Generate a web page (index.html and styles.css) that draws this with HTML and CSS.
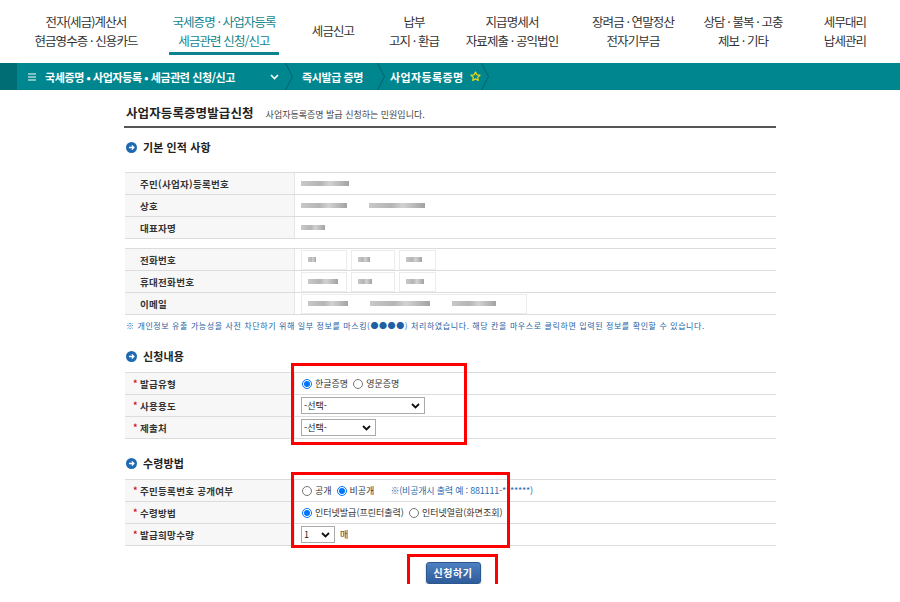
FILE: index.html
```html
<!DOCTYPE html>
<html lang="ko">
<head>
    <meta charset="UTF-8">
    <title>사업자등록증명발급신청</title>
    <link rel="stylesheet" href="styles.css">
</head>
<body>
    <header class="gnb">
        <ul class="gnb-list">
            <li>전자(세금)계산서<br>현금영수증 · 신용카드</li>
            <li class="on"><span>국세증명 · 사업자등록<br>세금관련 신청/신고</span></li>
            <li class="one">세금신고</li>
            <li>납부<br>고지 · 환급</li>
            <li>지급명세서<br>자료제출 · 공익법인</li>
            <li>장려금 · 연말정산<br>전자기부금</li>
            <li>상담 · 불복 · 고충<br>제보 · 기타</li>
            <li>세무대리<br>납세관리</li>
        </ul>
    </header>

    <nav class="location">
        <span class="loc-edge"></span>
        <div class="loc-menu">
            <svg class="loc-ham" width="8" height="8" viewBox="0 0 8 8"><path d="M0 1h8M0 4h8M0 7h8" stroke="#fff" stroke-width="1.2"/></svg>
            <span class="loc-title">국세증명 • 사업자등록 • 세금관련 신청/신고</span>
            <svg class="loc-down" width="9" height="6" viewBox="0 0 9 6"><path d="M1 1l3.5 3.5L8 1" fill="none" stroke="#fff" stroke-width="1.6"/></svg>
        </div>
        <svg class="loc-sep" width="8" height="27" viewBox="0 0 8 27"><path d="M0.5 0L7.5 13.5L0.5 27" fill="none" stroke="#00616a" stroke-width="1"/></svg>
        <div class="loc-item first">즉시발급 증명</div>
        <svg class="loc-sep" width="8" height="27" viewBox="0 0 8 27"><path d="M0.5 0L7.5 13.5L0.5 27" fill="none" stroke="#00616a" stroke-width="1"/></svg>
        <div class="loc-item last">사업자등록증명
            <svg class="loc-star" width="11" height="11" viewBox="0 0 12 12"><path d="M6 1l1.5 3.2 3.4.4-2.5 2.3.7 3.4L6 8.6 2.9 10.3l.7-3.4L1.1 4.6l3.4-.4z" fill="none" stroke="#e9d81c" stroke-width="1.3" stroke-linejoin="round"/></svg>
        </div>
        <svg class="loc-sep" width="8" height="27" viewBox="0 0 8 27"><path d="M0.5 0L7.5 13.5L0.5 27" fill="none" stroke="#00616a" stroke-width="1"/></svg>
    </nav>

    <main class="content">
        <div class="page-title">
            <h1>사업자등록증명발급신청</h1>
            <span class="page-desc">사업자등록증명 발급 신청하는 민원입니다.</span>
        </div>

        <h2 class="sec-title first">
            <svg width="11" height="11" viewBox="0 0 11 11"><circle cx="5.5" cy="5.5" r="5.5" fill="#1d6ab2"/><path d="M3 5.5h5M5.8 3.4l2.1 2.1-2.1 2.1" fill="none" stroke="#fff" stroke-width="1.3"/></svg>
            기본 인적 사항
        </h2>
        <div class="form-table">
            <div class="row">
                <div class="th">주민(사업자)등록번호</div>
                <div class="td"><span class="mask" style="width:48px"></span></div>
            </div>
            <div class="row">
                <div class="th">상호</div>
                <div class="td"><span class="mask" style="width:46px"></span><span class="mask gap" style="width:56px"></span></div>
            </div>
            <div class="row">
                <div class="th">대표자명</div>
                <div class="td"><span class="mask" style="width:24px"></span></div>
            </div>
        </div>
        <div class="form-table second">
            <div class="row">
                <div class="th">전화번호</div>
                <div class="td">
                    <span class="box" style="width:46px"><span class="mask" style="width:8px"></span></span>
                    <span class="box" style="width:44px"><span class="mask" style="width:12px"></span></span>
                    <span class="box" style="width:37px"><span class="mask" style="width:16px"></span></span>
                </div>
            </div>
            <div class="row">
                <div class="th">휴대전화번호</div>
                <div class="td">
                    <span class="box" style="width:46px"><span class="mask" style="width:30px"></span></span>
                    <span class="box" style="width:44px"><span class="mask" style="width:14px"></span></span>
                    <span class="box" style="width:37px"><span class="mask" style="width:18px"></span></span>
                </div>
            </div>
            <div class="row">
                <div class="th">이메일</div>
                <div class="td">
                    <span class="box wide"><span class="mask" style="width:40px"></span><span class="mask gap" style="width:60px"></span><span class="mask gap" style="width:44px"></span></span>
                </div>
            </div>
        </div>
        <p class="notice">※ 개인정보 유출 가능성을 사전 차단하기 위해 일부 정보를 마스킹(●●●●) 처리하였습니다. 해당 칸을 마우스로 클릭하면 입력된 정보를 확인할 수 있습니다.</p>

        <h2 class="sec-title">
            <svg width="11" height="11" viewBox="0 0 11 11"><circle cx="5.5" cy="5.5" r="5.5" fill="#1d6ab2"/><path d="M3 5.5h5M5.8 3.4l2.1 2.1-2.1 2.1" fill="none" stroke="#fff" stroke-width="1.3"/></svg>
            신청내용
        </h2>
        <div class="form-table">
            <div class="row">
                <div class="th req">발급유형</div>
                <div class="td">
                    <label class="radio"><input type="radio" name="lang" checked> 한글증명</label>
                    <label class="radio"><input type="radio" name="lang"> 영문증명</label>
                </div>
            </div>
            <div class="row">
                <div class="th req">사용용도</div>
                <div class="td">
                    <span class="select" style="width:124px"><select><option>-선택-</option></select>
                        <svg width="9" height="6" viewBox="0 0 9 6"><path d="M1 1l3.5 3.5L8 1" fill="none" stroke="#111" stroke-width="1.8"/></svg></span>
                </div>
            </div>
            <div class="row">
                <div class="th req">제출처</div>
                <div class="td">
                    <span class="select" style="width:75px"><select><option>-선택-</option></select>
                        <svg width="9" height="6" viewBox="0 0 9 6"><path d="M1 1l3.5 3.5L8 1" fill="none" stroke="#111" stroke-width="1.8"/></svg></span>
                </div>
            </div>
        </div>

        <h2 class="sec-title">
            <svg width="11" height="11" viewBox="0 0 11 11"><circle cx="5.5" cy="5.5" r="5.5" fill="#1d6ab2"/><path d="M3 5.5h5M5.8 3.4l2.1 2.1-2.1 2.1" fill="none" stroke="#fff" stroke-width="1.3"/></svg>
            수령방법
        </h2>
        <div class="form-table">
            <div class="row">
                <div class="th req">주민등록번호 공개여부</div>
                <div class="td">
                    <label class="radio"><input type="radio" name="open"> 공개</label>
                    <label class="radio"><input type="radio" name="open" checked> 비공개</label>
                    <span class="hint">※(비공개시 출력 예 : 881111-*******)</span>
                </div>
            </div>
            <div class="row">
                <div class="th req">수령방법</div>
                <div class="td">
                    <label class="radio"><input type="radio" name="recv" checked> 인터넷발급(프린터출력)</label>
                    <label class="radio"><input type="radio" name="recv"> 인터넷열람(화면조회)</label>
                </div>
            </div>
            <div class="row">
                <div class="th req">발급희망수량</div>
                <div class="td">
                    <span class="select" style="width:34px"><select><option>1</option></select>
                        <svg width="9" height="6" viewBox="0 0 9 6"><path d="M1 1l3.5 3.5L8 1" fill="none" stroke="#111" stroke-width="1.8"/></svg></span>
                    <span class="unit">매</span>
                </div>
            </div>
        </div>

        <div class="btn-area">
            <button class="btn-submit">신청하기</button>
        </div>

        <!-- highlight boxes drawn over the form -->
        <span class="mark mark-apply"></span>
        <span class="mark mark-recv"></span>
        <span class="mark mark-btn"></span>
    </main>
</body>
</html>
```

FILE: styles.css
```css
body {
    margin: 0;
    font-family: "Noto Sans CJK KR", "Noto Sans", sans-serif;
    color: #333;
    background: #fff;
}

/* top menu */
.gnb-list {
    list-style: none;
    margin: 0;
    padding: 0 0 0 17px;
    display: grid;
    grid-template-columns: 138px 138px 80px 82px 114px 128px 92px 112px;
    height: 63px;
}
.gnb-list li {
    text-align: center;
    font-size: 12.5px;
    line-height: 19px;
    padding-top: 12px;
    letter-spacing: -0.9px;
    white-space: nowrap;
    color: #333;
}
.gnb-list li.one {
    padding-top: 21px;
}
.gnb-list li.on {
    color: #138690;
}
.gnb-list li.on span {
    display: inline-block;
    padding: 0 3px 2px;
    border-bottom: 3px solid #0b838d;
}

/* location bar */
.location {
    display: flex;
    height: 27px;
    background: #00868f;
    color: #fff;
    font-size: 11px;
    font-weight: bold;
    letter-spacing: -0.4px;
}
.loc-edge {
    width: 17px;
    background: #006c74;
}
.loc-menu {
    display: flex;
    align-items: center;
    width: 257px;
    padding-left: 11px;
}
.loc-ham {
    margin-right: 9px;
}
.loc-title {
    flex: 1;
}
.loc-down {
    margin-right: 6px;
}
.loc-item {
    display: flex;
    align-items: center;
}
.loc-item.first {
    padding: 0 14px 0 9px;
}
.loc-item.last {
    padding: 0 0 0 5px;
    letter-spacing: 0.4px;
}
.loc-star {
    margin-left: 6px;
}

/* content */
.content {
    position: relative;
    width: 652px;
    margin: 0 auto;
    padding-top: 14px;
}
.page-title {
    display: flex;
    align-items: baseline;
    height: 22px;
    padding-left: 2px;
    border-bottom: 2px solid #555;
}
.page-title h1 {
    margin: 0;
    font-size: 12.5px;
    line-height: 18px;
    font-weight: bold;
    letter-spacing: 0.1px;
    color: #222;
}
.page-desc {
    margin-left: 12px;
    font-size: 9px;
    letter-spacing: 0;
    color: #444;
}
.sec-title {
    display: flex;
    align-items: center;
    margin: 16px 0 8px;
    height: 16px;
    padding-left: 2px;
    font-size: 11px;
    font-weight: bold;
    letter-spacing: 0.1px;
    color: #222;
}
.sec-title svg {
    margin-right: 6px;
}
.sec-title.first {
    margin: 11px 0 17px;
}

.form-table {
    margin-left: 1px;
    border-top: 1px solid #dcdcdc;
}
.form-table.second {
    margin-top: 9px;
}
.row {
    display: flex;
    height: 22px;
    box-sizing: border-box;
    border-bottom: 1px solid #dcdcdc;
}
.th {
    width: 170px;
    box-sizing: border-box;
    padding-left: 15px;
    display: flex;
    align-items: center;
    background: #f7f7f7;
    border-right: 1px solid #e6e6e6;
    font-size: 9.5px;
    font-weight: bold;
    letter-spacing: 0.3px;
    color: #333;
}
.th.req {
    padding-left: 8px;
}
.th.req::before {
    content: "*";
    color: #d0101b;
    font-size: 9px;
    width: 7px;
}
.td {
    flex: 1;
    display: flex;
    align-items: center;
    padding-left: 6px;
    font-size: 9px;
    color: #333;
}

/* masked personal data */
.mask {
    display: inline-block;
    height: 5px;
    background: linear-gradient(90deg, #c8c8c8, #b5b5b5 40%, #d2d2d2 60%, #a2a2a2);
    filter: blur(0.7px);
}
.mask.gap {
    margin-left: 22px;
}
.box {
    display: inline-flex;
    align-items: center;
    height: 20px;
    box-sizing: border-box;
    margin-right: 4px;
    padding-left: 6px;
    border: 1px solid #ececec;
}
.box.wide {
    width: 226px;
}

.notice {
    margin: 5px 0 0 2px;
    font-size: 8px;
    line-height: 12px;
    letter-spacing: 0.6px;
    color: #1f5fa4;
}

/* inputs */
.radio {
    display: inline-flex;
    align-items: center;
    margin-right: 4px;
    letter-spacing: 0;
}
.radio input {
    width: 10px;
    height: 10px;
    margin: 0 3px 0 1px;
}
.hint {
    margin-left: 12px;
    color: #2a6cb0;
    letter-spacing: -0.2px;
}
.select {
    position: relative;
    display: inline-block;
    height: 17px;
}
.select select {
    appearance: none;
    width: 100%;
    height: 17px;
    margin: 0;
    padding: 0 0 0 2px;
    border: 1px solid #aaa;
    border-radius: 0;
    background: #fff;
    font-family: inherit;
    font-size: 9px;
    color: #222;
}
.select svg {
    position: absolute;
    right: 5px;
    top: 6px;
}
.unit {
    margin-left: 5px;
}

.btn-area {
    text-align: center;
    padding: 12px 0 0 6px;
}
.btn-submit {
    width: 55px;
    height: 22px;
    border: 1px solid #2b5791;
    border-radius: 3px;
    background: linear-gradient(#4e7fc0, #2f5c9b);
    box-shadow: 0 1px 2px rgba(0, 0, 0, 0.3);
    color: #fff;
    font-family: inherit;
    font-size: 10px;
    font-weight: bold;
    letter-spacing: 0.5px;
}

/* red highlight boxes */
.mark {
    position: absolute;
    box-sizing: border-box;
    border: 3px solid #f00;
}
.mark-apply {
    left: 167px;
    top: 273px;
    width: 176px;
    height: 82px;
}
.mark-recv {
    left: 167px;
    top: 382px;
    width: 219px;
    height: 76px;
}
.mark-btn {
    left: 283px;
    top: 464px;
    width: 91px;
    height: 36px;
}
```
